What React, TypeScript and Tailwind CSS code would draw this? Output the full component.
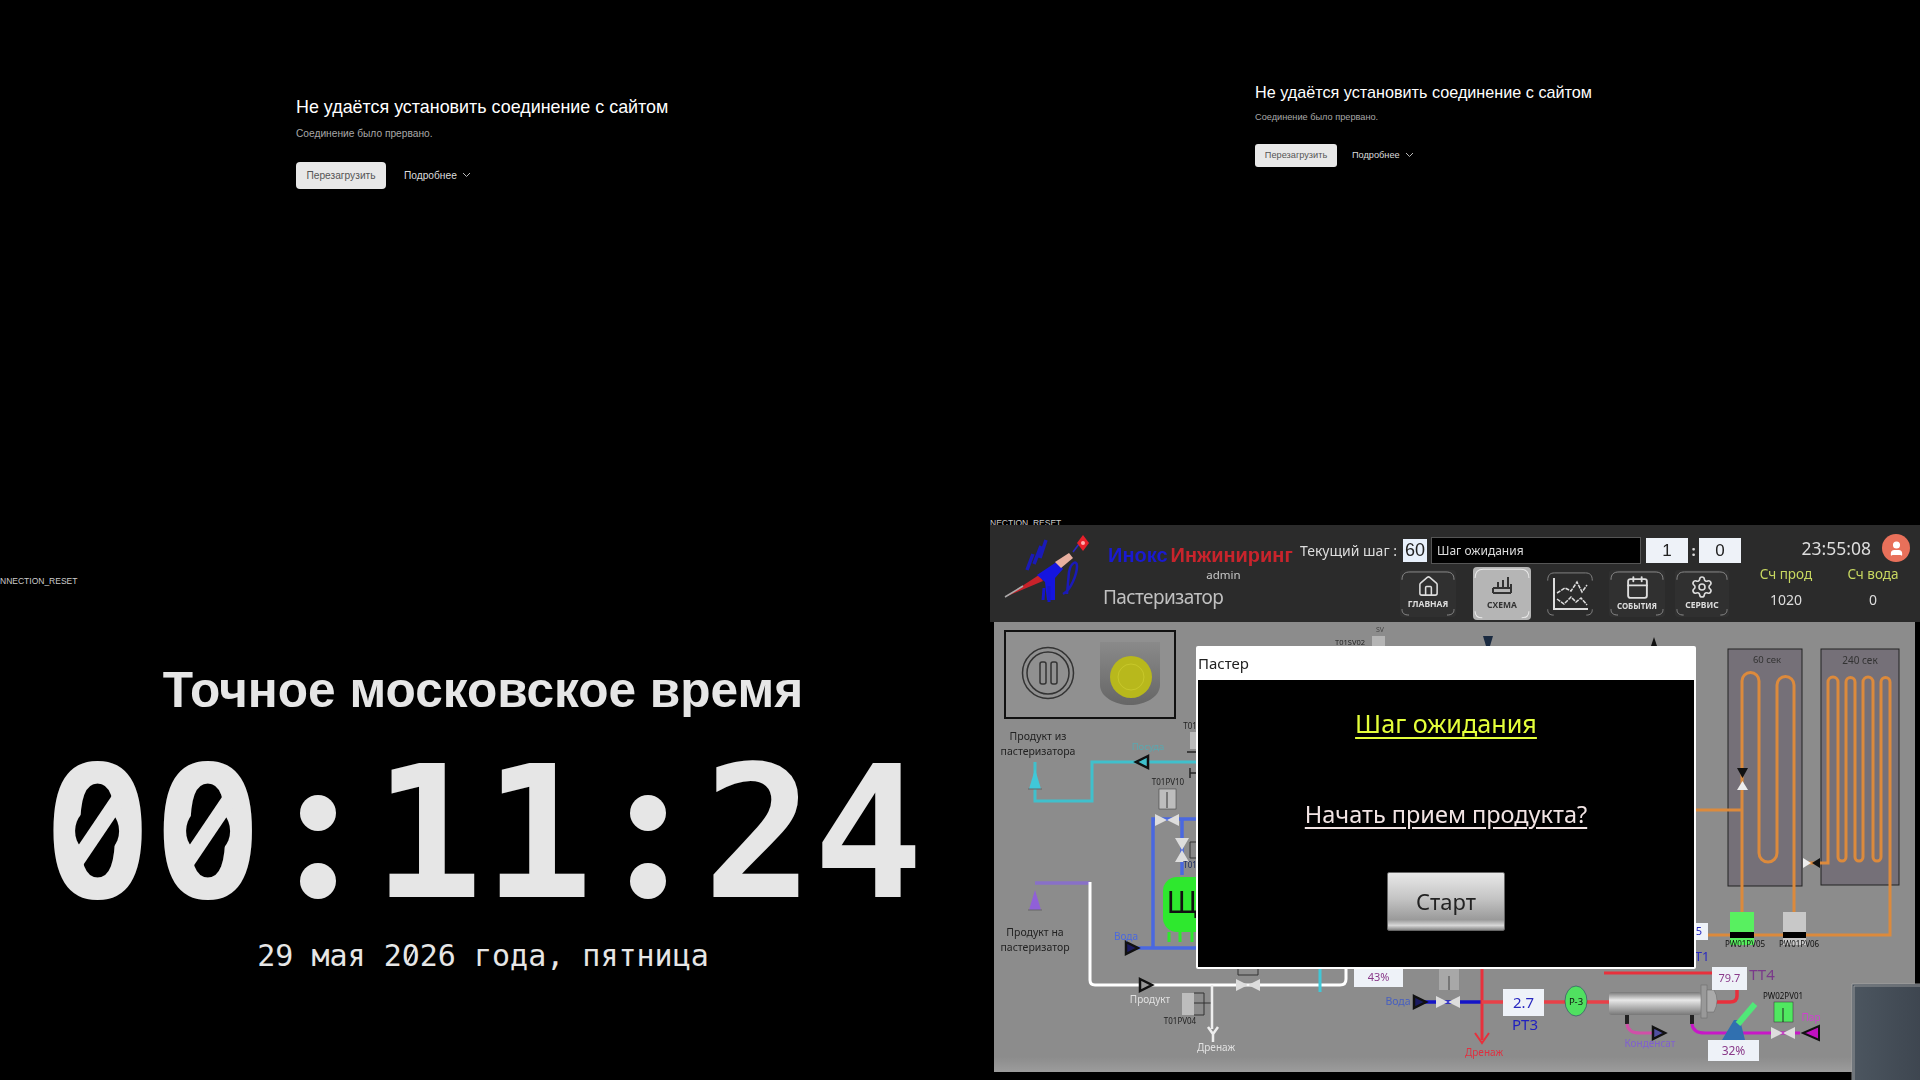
import { Calendar, House, Settings, User } from "lucide-react";
import type { ReactNode } from "react";

const sans = "font-['Liberation_Sans',Arial,sans-serif]";
const noto = "font-['Noto_Sans',sans-serif]";
const mono = "font-['DejaVu_Sans_Mono',monospace]";

function ConnectionError({ large }: { large?: boolean }) {
  return (
    <div className={sans}>
      <h1 className={large ? "text-[17.9px] leading-[22px] text-white" : "text-[16.2px] leading-[20px] text-white"}>
        Не удаётся установить соединение с сайтом
      </h1>
      <p className={large ? "mt-[10px] text-[10.2px] leading-[12px] text-[#a8a8a8]" : "mt-[10px] text-[9.2px] leading-[11px] text-[#a8a8a8]"}>
        Соединение было прервано.
      </p>
      <div className={large ? "mt-[22px] flex items-center gap-[18px]" : "mt-[21px] flex items-center gap-[15px]"}>
        <button className={large ? "h-[27px] w-[90px] rounded-[4px] bg-[#e8e8e8] text-[10.2px] text-[#555]" : "h-[23px] w-[82px] rounded-[3px] bg-[#e8e8e8] text-[9.2px] text-[#555]"}>
          Перезагрузить
        </button>
        <span className={large ? "flex items-center gap-[5px] text-[10.2px] text-[#ddd]" : "flex items-center gap-[5px] text-[9.2px] text-[#ddd]"}>
          Подробнее
          <svg width="9" height="6" viewBox="0 0 9 6" fill="none" stroke="#bbb" strokeWidth="1">
            <path d="M1 1l3.5 3.5L8 1" />
          </svg>
        </span>
      </div>
    </div>
  );
}

// the clock font on the original machine had a slashed zero, DejaVu has a dotted one
function ClockZero() {
  return (
    <span className="relative inline-block">
      0
      <svg className="absolute inset-0 h-full w-full" viewBox="0 0 110 210">
        <ellipse cx="55" cy="102" rx="22" ry="24" fill="#000" />
        <path d="M28 142L82 62" stroke="#e6e6e6" strokeWidth="15" />
      </svg>
    </span>
  );
}

function DateZero() {
  return (
    <span className="relative inline-block">
      0
      <svg className="absolute inset-0 h-full w-full" viewBox="0 0 18 40">
        <ellipse cx="9" cy="19.5" rx="3.2" ry="3.6" fill="#000" />
        <path d="M5 27L13 12" stroke="#e6e6e6" strokeWidth="1.7" />
      </svg>
    </span>
  );
}

function ClockColon() {
  return (
    <span className="relative inline-block w-[110px] text-transparent">
      :
      <span className="absolute left-[37px] top-[66px] h-[36px] w-[36px] rounded-full bg-[#e6e6e6]" />
      <span className="absolute left-[37px] top-[134px] h-[36px] w-[36px] rounded-full bg-[#e6e6e6]" />
    </span>
  );
}

function Brackets({ light }: { light?: boolean }) {
  const c = light ? "#e8e8e8" : "#8a8a8a";
  return (
    <svg className="absolute inset-0 h-full w-full" viewBox="0 0 56 48" preserveAspectRatio="none" fill="none" stroke={c} strokeWidth="1">
      <path d="M2 10C2 4 5 2 10 2H46C51 2 54 4 54 10" />
      <path d="M2 40C2 44 4 46 9 46M54 40C54 44 52 46 47 46" />
    </svg>
  );
}

function NavButton({ label, width, children, small }: { label: string; width: string; children: ReactNode; small?: boolean }) {
  return (
    <div className={`relative flex h-[47px] flex-col items-center justify-start rounded-[3px] bg-[#303030] pt-[5px] ${width}`}>
      <Brackets />
      {children}
      <span className={small ? "mt-[1px] text-[8px] font-bold leading-[10px] text-[#ddd]" : "mt-[1px] text-[8.5px] font-bold leading-[10px] text-[#ddd]"}>
        {label}
      </span>
    </div>
  );
}

function Logo() {
  return (
    <svg width="90" height="76" viewBox="0 0 90 76">
      <path d="M2 65L36 43L40 49Z" fill="#c8222a" />
      <path d="M2 65L20 54" stroke="#aaa" strokeWidth="1.5" />
      <path d="M34 43L55 29L60 37L52 46L52 68H44L42 50Z" fill="#1515e0" />
      <path d="M52 30L66 21L70 26L58 36Z" fill="#e8b0a0" />
      <path d="M70 20L76 12" stroke="#2a2ac0" strokeWidth="1.5" />
      <path d="M80 3L86 11L80 19L74 11Z" fill="#e8202a" />
      <circle cx="80" cy="11" r="2" fill="#ffb0b0" />
      <path d="M24 38L30 22M31 32L38 14M37 26L43 8" stroke="#1a1ab8" strokeWidth="3.5" />
      <path d="M60 62C68 58 74 42 74 34C74 28 68 30 66 40L64 62" stroke="#1a1ab8" strokeWidth="2.5" fill="none" />
      <path d="M41 56L40 68M46 54V70" stroke="#1515c8" strokeWidth="3" />
    </svg>
  );
}

function T({ x, y, s = 10, c = "#222", a = "middle", children }: { x: number; y: number; s?: number; c?: string; a?: "middle" | "start"; children: string }) {
  return (
    <text x={x} y={y} fontSize={s} fill={c} textAnchor={a} dominantBaseline="middle" fontFamily="Noto Sans, sans-serif">
      {children}
    </text>
  );
}

function Flow({ x, y, dir, fill }: { x: number; y: number; dir: "l" | "r"; fill: string }) {
  const d = dir === "l" ? `M${x + 6} ${y - 6}L${x - 6} ${y}L${x + 6} ${y + 6}Z` : `M${x - 6} ${y - 6}L${x + 6} ${y}L${x - 6} ${y + 6}Z`;
  return <path d={d} fill={fill} stroke="#111" strokeWidth="2.5" />;
}

function Cone({ x, y, fill }: { x: number; y: number; fill: string }) {
  return (
    <g>
      <path d={`M${x} ${y - 12}L${x + 6} ${y + 8}H${x - 6}Z`} fill={fill} />
      <path d={`M${x - 7} ${y + 8}H${x + 7}`} stroke="#666" strokeWidth="1" />
    </g>
  );
}

function Valve({ x, y, vertical }: { x: number; y: number; vertical?: boolean }) {
  return vertical ? (
    <path d={`M${x - 7} ${y - 12}H${x + 7}L${x} ${y}L${x + 7} ${y + 12}H${x - 7}L${x} ${y}Z`} fill="#ddd" />
  ) : (
    <path d={`M${x - 12} ${y - 6}V${y + 6}L${x} ${y}L${x + 12} ${y + 6}V${y - 6}L${x} ${y}Z`} fill="#ddd" />
  );
}

function ValueBox({ x, y, w, h, text, c, s }: { x: number; y: number; w: number; h: number; text: string; c: string; s: number }) {
  return (
    <g>
      <rect x={x} y={y} width={w} height={h} fill="#eef2f8" />
      <T x={x + w / 2} y={y + h / 2 + 1} s={s} c={c}>{text}</T>
    </g>
  );
}

function Diagram() {
  return (
    <svg className="block h-full w-full" viewBox="990 622 930 458">
      <defs>
        <linearGradient id="hx" x1="0" y1="0" x2="0" y2="1">
          <stop offset="0" stopColor="#777" />
          <stop offset="0.35" stopColor="#e8e8e8" />
          <stop offset="1" stopColor="#777" />
        </linearGradient>
        <linearGradient id="band" x1="0" y1="0" x2="0" y2="1">
          <stop offset="0" stopColor="#8c8c8c" />
          <stop offset="1" stopColor="#9c9c9c" />
        </linearGradient>
        <linearGradient id="stopbtn" x1="0" y1="0" x2="0" y2="1">
          <stop offset="0" stopColor="#8a8a8a" />
          <stop offset="1" stopColor="#666" />
        </linearGradient>
        <linearGradient id="slate" x1="0" y1="0" x2="1" y2="0">
          <stop offset="0" stopColor="#4c5660" />
          <stop offset="1" stopColor="#3e4650" />
        </linearGradient>
      </defs>
      <rect x="994" y="622" width="921" height="450" fill="#8c8c8c" />
      <rect x="994" y="1057" width="921" height="15" fill="url(#band)" />

      {/* панель пауза / стоп */}
      <rect x="1005" y="631" width="170" height="87" fill="#909090" stroke="#111" strokeWidth="2" />
      <circle cx="1048" cy="673" r="25.5" fill="none" stroke="#333" strokeWidth="1.5" />
      <circle cx="1048" cy="673" r="21" fill="none" stroke="#333" strokeWidth="1.5" />
      <rect x="1040" y="662" width="6" height="22" rx="2" fill="none" stroke="#333" strokeWidth="1.5" />
      <rect x="1051" y="662" width="6" height="22" rx="2" fill="none" stroke="#333" strokeWidth="1.5" />
      <path d="M1100 642H1160V685C1160 697 1145 705 1130 705S1100 697 1100 685Z" fill="url(#stopbtn)" />
      <circle cx="1131" cy="677" r="21" fill="#b8b81c" />
      <circle cx="1131" cy="677" r="13" fill="none" stroke="#c8c82a" strokeWidth="1" />
      <T x={1038} y={737} s={10.5}>Продукт из</T>
      <T x={1038} y={752} s={10.5}>пастеризатора</T>

      {/* обратка */}
      <path d="M1197 762H1092V801H1035V762" fill="none" stroke="#40c0cc" strokeWidth="3" />
      <Cone x={1035} y={781} fill="#40c8d8" />
      <Flow x={1142} y={762} dir="l" fill="#40c0cc" />
      <T x={1148} y={747} s={9.5} c="#5aa8b0">Посуда</T>
      <T x={1190} y={727} s={8}>T01</T>
      <rect x="1190" y="732" width="8" height="17" fill="#bbb" />
      <path d="M1187 752H1197M1190 768V778M1190 773H1197" stroke="#222" strokeWidth="1.5" fill="none" />
      <T x={1168} y={783} s={8}>T01PV10</T>
      <rect x="1159" y="789" width="17" height="20" fill="#bdbdbd" stroke="#333" strokeWidth="0.5" />
      <path d="M1167 792V808" stroke="#333" strokeWidth="1" />

      {/* вода */}
      <path d="M1197 819H1153V948H1197M1182 819V875M1153 948H1127" fill="none" stroke="#4a68e0" strokeWidth="3.5" />
      <Valve x={1167} y={820} />
      <Valve x={1182} y={850} vertical />
      <path d="M1190 842H1197V858H1190Z" fill="#888" stroke="#333" strokeWidth="1" />
      <T x={1190} y={866} s={8} c="#1a2a60">T01</T>
      <rect x="1163" y="877" width="60" height="55" rx="14" fill="#2ee82e" />
      <path d="M1169 932v10M1180 932v10M1192 932v10" stroke="#2ee82e" strokeWidth="3" />
      <T x={1182} y={905} s={30} c="#111">Щ</T>
      <Flow x={1132} y={948} dir="r" fill="#1a1a60" />
      <T x={1126} y={937} s={10} c="#4a68e0">Вода</T>

      {/* продукт */}
      <path d="M1035 883H1090" stroke="#8870c8" strokeWidth="3.5" />
      <Cone x={1035} y={902} fill="#9060d8" />
      <T x={1035} y={933} s={10.5}>Продукт на</T>
      <T x={1035} y={948} s={10.5}>пастеризатор</T>
      <path d="M1090 882V980Q1090 985 1095 985H1340Q1346 985 1346 979V965" fill="none" stroke="#fff" strokeWidth="3" />
      <Flow x={1146} y={985} dir="r" fill="#999" />
      <T x={1150} y={1000} s={10} c="#e0e0e0">Продукт</T>
      <rect x="1182" y="993" width="12" height="22" fill="#bdbdbd" />
      <path d="M1194 993H1204V1015H1194M1194 1003H1212" stroke="#333" strokeWidth="1" fill="none" />
      <path d="M1212 985V1029M1208 1027L1213 1034L1218 1027M1213 1034V1042" stroke="#eee" strokeWidth="2.5" fill="none" />
      <T x={1180} y={1022} s={8}>T01PV04</T>
      <T x={1216} y={1048} s={10} c="#e0e0e0">Дренаж</T>
      <Valve x={1248} y={985} />
      <path d="M1238 969V975H1258V969" fill="none" stroke="#333" strokeWidth="1" />
      <path d="M1320 968V992" stroke="#40c8d8" strokeWidth="3" />
      <ValueBox x={1354} y={968} w={49} h={19} text="43%" c="#8a3a8a" s={11} />

      {/* верх за диалогом */}
      <T x={1350} y={643} s={7.5}>T01SV02</T>
      <rect x="1372" y="636" width="13" height="10" fill="#b5b5b5" />
      <T x={1380} y={630} s={7} c="#444">SV</T>
      <path d="M1483 636H1493L1490 646H1486Z" fill="#1a2a40" />
      <path d="M1654 637L1657 646H1651Z" fill="#111" />

      {/* пар / подача */}
      <path d="M1416 1002H1482" stroke="#1414c8" strokeWidth="3.5" />
      <rect x="1439" y="969" width="20" height="21" fill="#a8a8a8" />
      <path d="M1449 976V990" stroke="#444" strokeWidth="1" />
      <Valve x={1448} y={1002} />
      <Flow x={1420} y={1002} dir="r" fill="#1a1a60" />
      <T x={1398} y={1002} s={10.5} c="#4860c0">Вода</T>
      <path d="M1482 968V1040" stroke="#e8303c" strokeWidth="3" />
      <path d="M1475 1033L1482 1043L1489 1033" fill="none" stroke="#e8303c" strokeWidth="2" />
      <T x={1484} y={1053} s={10} c="#e03040">Дренаж</T>
      <path d="M1482 1002H1610" stroke="#e84048" strokeWidth="3.5" />
      <ValueBox x={1503} y={989} w={41} h={27} text="2.7" c="#2828c0" s={15} />
      <T x={1525} y={1026} s={15} c="#2020c0">РТ3</T>
      <ellipse cx="1576" cy="1001" rx="11" ry="15" fill="#50e060" stroke="#226" strokeWidth="0.5" />
      <T x={1576} y={1002} s={9.5} c="#111">P-3</T>
      <path d="M1604 973H1712" stroke="#e8303c" strokeWidth="3" />
      <path d="M1737 988V996Q1737 1002 1730 1002H1712" fill="none" stroke="#e8303c" strokeWidth="3.5" />
      <rect x="1609" y="992" width="92" height="23" rx="3" fill="url(#hx)" />
      <rect x="1701" y="985" width="6" height="33" fill="#999" stroke="#666" strokeWidth="0.5" />
      <path d="M1707 990H1714Q1720 1000 1714 1012H1707Z" fill="#aaa" stroke="#666" strokeWidth="0.5" />
      <path d="M1627 1015V1024M1692 1015V1024" stroke="#222" strokeWidth="4" />
      <path d="M1627 1024Q1628 1033 1640 1033H1655" fill="none" stroke="#d050a8" strokeWidth="3" />
      <Flow x={1659} y={1033} dir="r" fill="#5050a0" />
      <T x={1650} y={1044} s={10} c="#8060d0">Конденсат</T>
      <path d="M1692 1024Q1693 1033 1705 1033H1800" fill="none" stroke="#c818c8" strokeWidth="3" />
      <path d="M1722 1040L1734 1020L1740 1020L1745 1040Z" fill="#3070b0" />
      <path d="M1738 1024L1755 1004" stroke="#50e878" strokeWidth="6" />
      <ValueBox x={1708} y={1040} w={51} h={21} text="32%" c="#8a3a8a" s={12} />
      <rect x="1774" y="1002" width="19" height="20" fill="#50e860" stroke="#333" strokeWidth="0.5" />
      <path d="M1783 1008V1022" stroke="#222" strokeWidth="1" />
      <Valve x={1783} y={1033} />
      <T x={1783} y={997} s={8} c="#111">PW02PV01</T>
      <path d="M1819 1026V1040L1803 1033Z" fill="#c010c0" stroke="#111" strokeWidth="2" />
      <T x={1811} y={1018} s={10} c="#d040d0">Пар</T>
      <ValueBox x={1712} y={967} w={35} h={23} text="79.7" c="#8a3a8a" s={11} />
      <T x={1762} y={976} s={15} c="#7a3a8a">TT4</T>

      {/* выдержка */}
      <rect x="1728" y="649" width="74" height="237" fill="#757078" stroke="#222" strokeWidth="1" />
      <rect x="1821" y="649" width="78" height="236" fill="#757078" stroke="#222" strokeWidth="1" />
      <T x={1767} y={660} s={9.5} c="#333">60 сек</T>
      <T x={1860} y={661} s={10} c="#333">240 сек</T>
      <path
        d="M1742 935V681A8.5 8.5 0 0 1 1759 681V853A9 9 0 0 0 1777 853V685A8.5 8.5 0 0 1 1794 685V935"
        fill="none"
        stroke="#dc8a3c"
        strokeWidth="3"
      />
      <path d="M1696 810H1742" stroke="#dc8a3c" strokeWidth="3" />
      <path
        d="M1807 863H1828V682A5 5 0 0 1 1838 682V857A4 4 0 0 0 1846 857V682A4.5 4.5 0 0 1 1855 682V857A4 4 0 0 0 1863 857V682A5 5 0 0 1 1873 682V857A4 4 0 0 0 1881 857V682A4.5 4.5 0 0 1 1890 682V935H1708"
        fill="none"
        stroke="#dc8a3c"
        strokeWidth="3"
      />
      <path d="M1737 768H1748L1742.5 778Z" fill="#111" />
      <path d="M1737 790H1748L1742.5 781Z" fill="#eee" />
      <path d="M1803 858V868L1811 863Z" fill="#eee" />
      <path d="M1820 858V868L1812 863Z" fill="#111" />
      <rect x="1730" y="912" width="24" height="33" fill="#58f060" />
      <rect x="1730" y="932" width="24" height="6" fill="#000" />
      <rect x="1783" y="912" width="23" height="33" fill="#c8c8c8" />
      <rect x="1783" y="932" width="23" height="6" fill="#000" />
      <T x={1745} y={945} s={8} c="#111">PW01PV05</T>
      <T x={1799} y={945} s={8} c="#111">PW01PV06</T>
      <rect x="1696" y="923" width="12" height="17" fill="#eef2f8" />
      <T x={1699} y={932} s={11} c="#2828c0">5</T>
      <T x={1702} y={958} s={13} c="#2828c0">T1</T>

      {/* окно поверх */}
      <rect x="1852" y="984" width="68" height="96" fill="url(#slate)" />
      <path d="M1852 1080V984H1920M1854 1080V986H1920" fill="none" stroke="#a8a8a8" strokeWidth="0.8" />
    </svg>
  );
}

function StartDialog() {
  return (
    <div className={`absolute left-[206px] top-[24px] flex h-[323px] w-[500px] flex-col rounded-[2px] bg-white px-[2px] pb-[2px] ${noto}`}>
      <div className="flex h-[34px] items-center text-[15px] text-[#222]">Пастер</div>
      <div className="flex flex-1 flex-col items-center bg-black">
        <p className="mt-[24px] text-[25.2px] leading-[38px] text-[#e4ff3a] underline underline-offset-[4px]">Шаг ожидания</p>
        <p className="mt-[53px] text-[23.5px] leading-[38px] text-[#f2e4e4] underline underline-offset-[4px]">Начать прием продукта?</p>
        <button className="mt-[39px] h-[59px] w-[118px] rounded-[2px] border border-[#666] bg-[linear-gradient(#e8e8e8,#c4c4c4_45%,#9a9a9a_82%,#d8d8d8_92%,#888)] text-[22px] text-[#222]">
          Старт
        </button>
      </div>
    </div>
  );
}

function Hmi() {
  return (
    <section className="h-[555px] blur-[0.5px]">
      <header className={`flex h-[97px] bg-[#2b2b2b] text-[#ddd] ${noto}`}>
        <div className="w-[113px] pl-[13px] pt-[7px]">
          <Logo />
        </div>
        <div className="w-[197px]">
          <div className={`ml-[5px] mt-[17px] flex gap-[3px] text-[20px] font-bold leading-[26px] ${sans}`}>
            <span className="text-[#1a1ad0]">Инокс</span>
            <span className="text-[#c8242c]">Инжиниринг</span>
          </div>
          <div className="pl-[44px] text-center text-[11.5px] leading-[14px] text-[#c8c8c8]">admin</div>
          <div className="mt-[3px] text-[19px] leading-[24px] tracking-[-0.6px] text-[#c0c0c0]">Пастеризатор</div>
        </div>
        <div className="w-[446px]">
          <div className="mt-[12px] flex items-center">
            <span className="w-[103px] text-[14px] leading-[24px] text-[#ddd]">Текущий шаг :</span>
            <span className={`flex h-[23px] w-[24px] items-center justify-center bg-[#e8f0fb] text-[18px] text-[#222] ${sans}`}>60</span>
            <span className="ml-[4px] flex h-[27px] w-[210px] items-center border border-[#555] bg-black pl-[5px] text-[12px] text-[#ddd]">Шаг ожидания</span>
            <span className={`ml-[5px] flex h-[25px] w-[42px] items-center justify-center bg-[#eef2f8] text-[17px] text-[#222] ${sans}`}>1</span>
            <span className="w-[11px] text-center text-[15px] font-bold">:</span>
            <span className={`flex h-[25px] w-[42px] items-center justify-center bg-[#eef2f8] text-[17px] text-[#222] ${sans}`}>0</span>
          </div>
          <nav className="ml-[100px] mt-[3px] flex items-center">
            <NavButton label="ГЛАВНАЯ" width="w-[56px]">
              <House size={23} strokeWidth={1.6} />
            </NavButton>
            <div className="relative ml-[17px] flex h-[53px] w-[58px] flex-col items-center rounded-[4px] bg-[#b5b5b5] pt-[7px]">
              <Brackets light />
              <svg width="24" height="24" viewBox="0 0 24 24" fill="none" stroke="#333" strokeWidth="2">
                <path d="M3 14H21M3 19H21M3 14V19M8 8V14M18 3V14M21 10V19M13 6V14" />
              </svg>
              <span className="mt-[2px] text-[8.5px] font-bold leading-[10px] text-[#333]">СХЕМА</span>
            </div>
            <div className="relative ml-[15px] h-[46px] w-[48px]">
              <Brackets />
              <svg className="absolute inset-0 h-full w-full" viewBox="0 0 48 46" fill="none" stroke="#ddd" strokeWidth="1.5">
                <path d="M8 7V38H42" strokeWidth="2" />
                <path d="M11 22L19 17L25 20L31 11L36 21L41 14" strokeDasharray="4 1" />
                <path d="M11 28L18 33L25 26L30 31L35 27L41 34" strokeDasharray="4 1" />
              </svg>
            </div>
            <div className="ml-[15px]">
              <NavButton label="СОБЫТИЯ" width="w-[56px]" small>
                <Calendar size={25} strokeWidth={1.8} />
              </NavButton>
            </div>
            <div className="ml-[10px]">
              <NavButton label="СЕРВИС" width="w-[54px]">
                <Settings size={24} strokeWidth={1.6} />
              </NavButton>
            </div>
          </nav>
        </div>
        <div className="flex-1">
          <div className="mt-[9px] flex items-center justify-end pr-[10px]">
            <span className="mr-[11px] text-[17.5px] leading-[28px] text-[#ddd]">23:55:08</span>
            <span className="flex h-[28px] w-[28px] items-center justify-center rounded-full bg-[#e8705a]">
              <User size={17} color="#fff" fill="#fff" />
            </span>
          </div>
          <div className="mt-[1px] grid grid-cols-[80px_94px] text-center text-[13.5px]">
            <span className="leading-[22px] text-[#c8d860]">Сч прод</span>
            <span className="leading-[22px] text-[#c8d860]">Сч вода</span>
            <span className="mt-[5px] text-[14px] leading-[20px] text-[#ddd]">1020</span>
            <span className="mt-[5px] text-[14px] leading-[20px] text-[#ddd]">0</span>
          </div>
        </div>
      </header>
      <div className="relative h-[458px]">
        <Diagram />
        <StartDialog />
      </div>
    </section>
  );
}

export default function App() {
  return (
    <div className="flex h-[1080px] w-[1920px] overflow-hidden bg-black">
      <div className="w-[990px] overflow-hidden">
        <div className="ml-[296px] pt-[96px]">
          <ConnectionError large />
        </div>
        <div className={`mt-[387px] h-[10px] text-[8.5px] leading-[10px] text-[#ccc] ${sans}`}>NNECTION_RESET</div>
        <div className="w-[966px] text-center">
          <h2 className={`mt-[74px] text-[49.6px] font-bold leading-[60px] text-[#e6e6e6] ${sans}`}>Точное московское время</h2>
          <div className={`mt-[9px] text-[183px] font-bold leading-[210px] text-[#e6e6e6] ${mono}`}>
            <ClockZero />
            <ClockZero />
            <ClockColon />
            11
            <ClockColon />
            24
          </div>
          <div className={`-mt-[3px] text-[30px] leading-[40px] text-[#e6e6e6] ${mono}`}>
            29 мая 2<DateZero />26 года, пятница
          </div>
        </div>
      </div>
      <div className="flex w-[930px] flex-col">
        <div className="ml-[265px] pt-[82px]">
          <ConnectionError />
        </div>
        <div className={`mt-auto h-[7px] text-[8.5px] leading-[10px] text-[#ccc] ${sans}`}>NECTION_RESET</div>
        <Hmi />
      </div>
    </div>
  );
}
